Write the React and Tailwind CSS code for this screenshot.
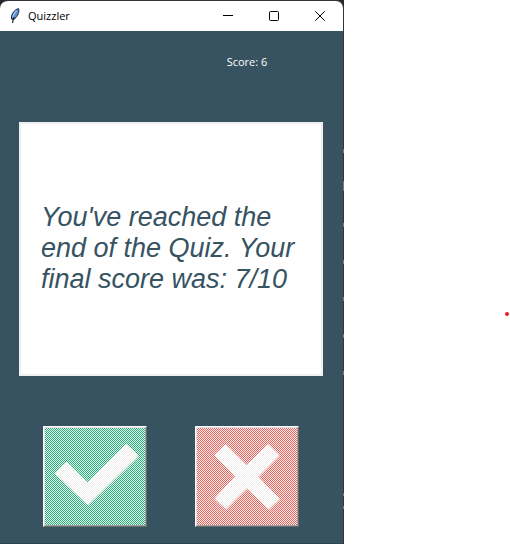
import React from "react";

const EDGE_GLINTS = [
  { y: 149, h: 4 },
  { y: 181, h: 10 },
  { y: 223, h: 4 },
  { y: 260, h: 4 },
  { y: 297, h: 4 },
  { y: 334, h: 4 },
  { y: 371, h: 4 },
  { y: 493, h: 3 },
  { y: 506, h: 3 },
];

function FeatherIcon() {
  return (
    <svg width="16" height="16" viewBox="0 0 16 16" aria-hidden="true">
      <path d="M11.4 0.6 C8.4 1.4 5.2 4.6 4.6 8 L4.4 11 L6.8 11.4 C9.6 9.6 12.2 5.6 11.9 1.2 Z" fill="#5c8fd6" stroke="#10151f" strokeWidth="0.9" />
      <path d="M9.4 2.8 C7.6 4.4 6.2 6.8 5.8 9.6" fill="none" stroke="#a9caf2" strokeWidth="1.2" />
      <path d="M7.2 9 C6.4 10.6 5.8 12.5 5.6 15" fill="none" stroke="#10151f" strokeWidth="1.1" />
    </svg>
  );
}

function TitleBar() {
  return (
    <header className="flex h-[30px] items-center bg-white pl-[7px]">
      <FeatherIcon />
      <h1 className="ml-[5px] flex-1 text-[11px] leading-4 text-black">Quizzler</h1>
      <button type="button" aria-label="Minimize" className="flex h-full w-[46px] items-center justify-center">
        <svg width="10" height="10" viewBox="0 0 10 10" shapeRendering="crispEdges">
          <path d="M0 4.5 H10" stroke="#000" />
        </svg>
      </button>
      <button type="button" aria-label="Maximize" className="flex h-full w-[46px] items-center justify-center">
        <svg width="10" height="10" viewBox="0 0 10 10">
          <rect x="0.5" y="0.5" width="9" height="9" rx="1" fill="none" stroke="#000" />
        </svg>
      </button>
      <button type="button" aria-label="Close" className="flex h-full w-[46px] items-center justify-center">
        <svg width="10" height="10" viewBox="0 0 10 10">
          <path d="M0.2 0.2 L9.8 9.8 M9.8 0.2 L0.2 9.8" stroke="#000" />
        </svg>
      </button>
    </header>
  );
}

function AnswerButton({ label, face, halo, path }) {
  return (
    <button
      type="button"
      aria-label={label}
      className="mt-[50px] border border-t-white border-l-white border-r-[#696969] border-b-[#696969]"
    >
      <span className="block border border-t-[#e3e3e3] border-l-[#e3e3e3] border-r-[#a0a0a0] border-b-[#a0a0a0]">
        <span className={`relative block ${face}`}>
          <svg width="100" height="97" viewBox="0 0 100 97" className="block">
            <path d={path} fill={halo} transform="translate(1 1)" />
            <path d={path} fill="#ffffff" />
          </svg>
          {/* disabled-state stipple over the whole face */}
          <span className="absolute inset-0 bg-[conic-gradient(transparent_25%,#f0f0f0_0_50%,transparent_0_75%,#f0f0f0_0)] bg-[length:2px_2px]" />
        </span>
      </span>
    </button>
  );
}

export default function App() {
  return (
    <div className="relative min-h-screen bg-white font-['Open_Sans','Noto_Sans',sans-serif]">
      <div className="relative w-86 bg-[#26282d]">
        <div className="overflow-hidden rounded-t-lg border-t border-r border-[#34343c]">
          <TitleBar />
          <main className="grid grid-cols-2 justify-items-center border-b border-[#2d4452] bg-[#375362] pt-[23px] pr-5 pb-4 pl-[19px]">
            <p className="col-start-2 text-[11px] leading-4 text-white">Score: 6</p>
            <section className="col-span-2 mt-[52px] flex h-[254px] w-full items-center border-2 border-[#f0f0f0] bg-white pr-2 pb-0.5 pl-5">
              <p className="font-['Liberation_Sans',Arial,sans-serif] text-[27px] leading-[31px] text-[#375362] italic">
                You&apos;ve reached the end of the Quiz. Your final score was: 7/10
              </p>
            </section>
            <AnswerButton
              label="True"
              face="bg-[#1fb57b]"
              halo="#a8dcc5"
              path="M10 45.5 L21.5 34 L42.5 54.5 L81.5 16 L93 27.5 L42.5 77 Z"
            />
            <AnswerButton
              label="False"
              face="bg-[#f4635c]"
              halo="#f8c0b8"
              path="M17.5 27 L28.5 16 L49.5 37 L71 16 L82 27 L61 48.5 L82 70.5 L71 81 L49.5 60 L28.5 81 L17.5 70.5 L38 48.5 Z"
            />
          </main>
        </div>
        <svg className="absolute inset-y-0 right-0 h-full w-px" aria-hidden="true">
          {EDGE_GLINTS.map(({ y, h }) => (
            <rect key={y} y={y} width="1" height={h} fill="#77797a" />
          ))}
        </svg>
      </div>
      <span className="absolute top-[312px] right-px size-1 rounded-full bg-[#e81b23]" />
    </div>
  );
}
